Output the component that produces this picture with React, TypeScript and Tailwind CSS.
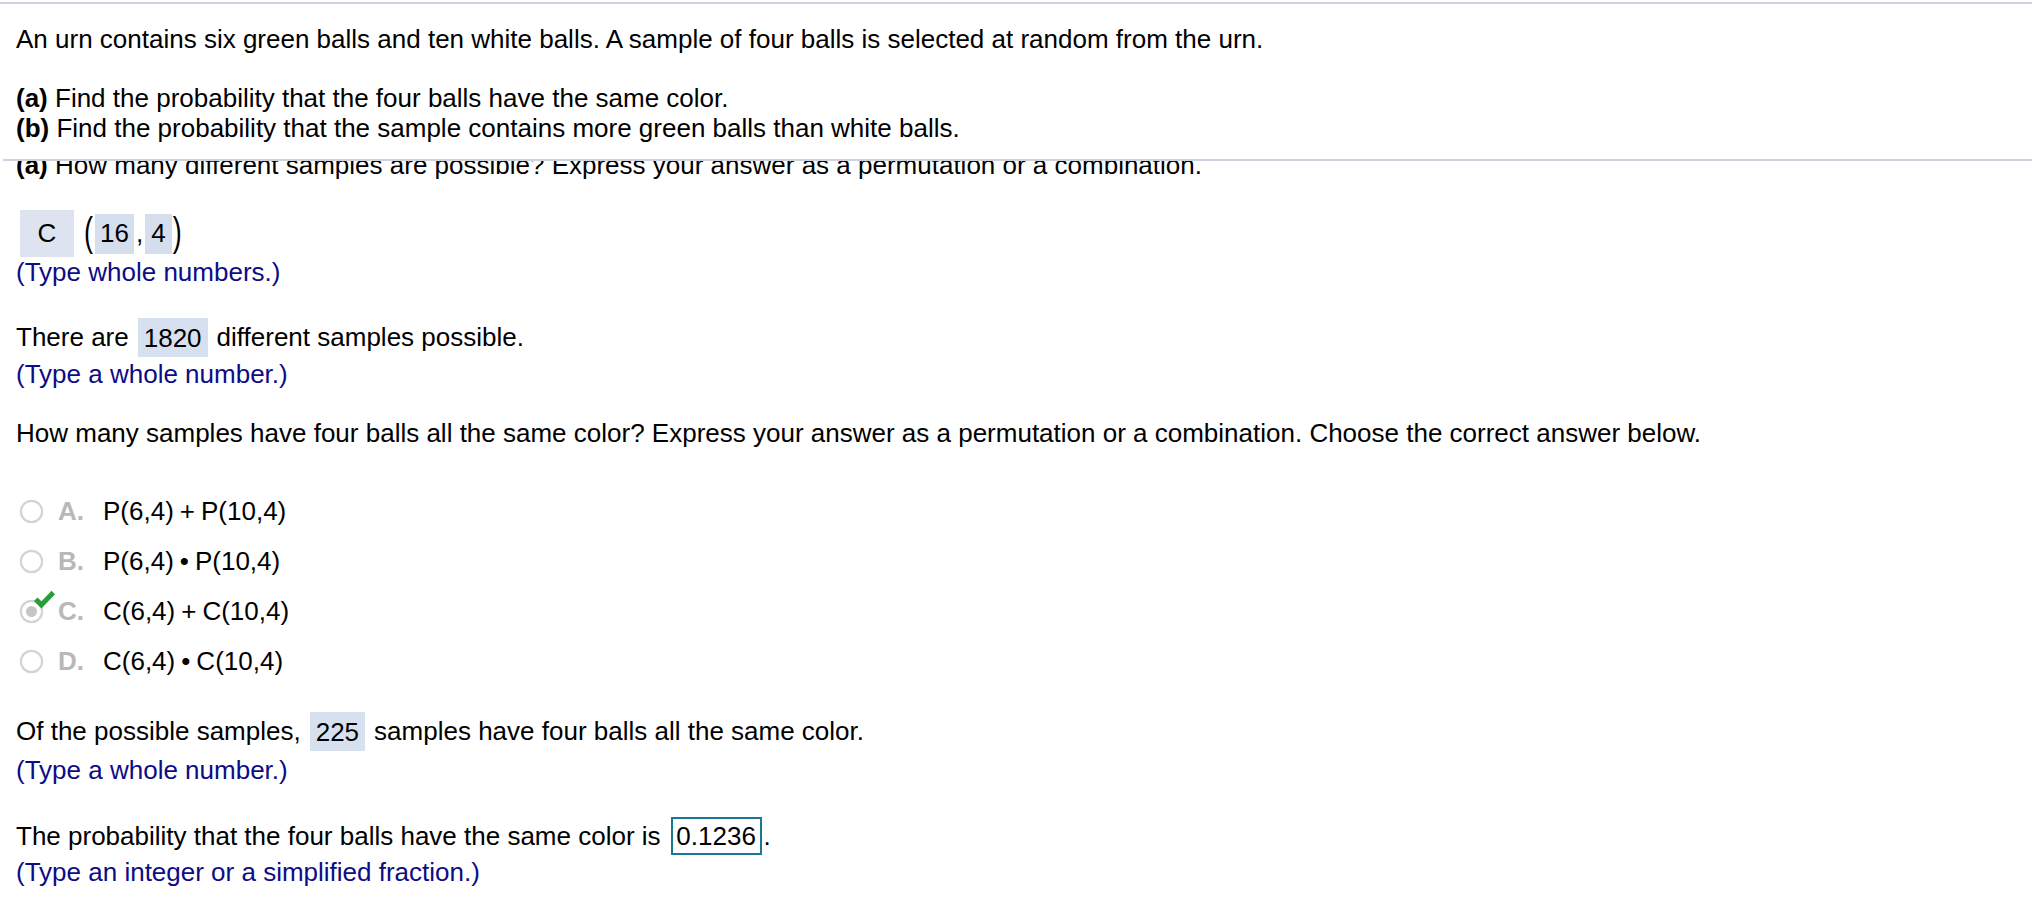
import React from "react";

const font = "font-['Liberation_Sans',Arial,Helvetica,sans-serif]";

function Hint({ children, className = "" }: { children: React.ReactNode; className?: string }) {
  return <div className={`leading-[30px] text-[#0c0c86] ${className}`}>{children}</div>;
}

function Answer({ value }: { value: string }) {
  return (
    <span className="mx-[9px] flex h-[39px] items-center bg-[#d7e0ee] px-[6px] leading-[30px]">
      {value}
    </span>
  );
}

function Radio({ checked }: { checked?: boolean }) {
  return (
    <span className="relative flex h-[23px] w-[23px] items-center justify-center rounded-full border-2 border-[#d3d3d3] bg-white shadow-[0_0_1px_#d8d8d8]">
      {checked && <span className="h-[11px] w-[11px] rounded-full bg-[#c6c6c6]" />}
      {checked && (
        <svg
          className="absolute left-[11px] top-[-12px]"
          width="23"
          height="20"
          viewBox="0 0 21 19"
        >
          <path d="M0.5 10.5 L3.8 7.2 L7.6 10.8 L17.2 0.8 L20.5 4 L7.6 17.5 Z" fill="#2b9b3c" />
        </svg>
      )}
    </span>
  );
}

const options = [
  { letter: "A.", a: "P(6,4)", op: "+", b: "P(10,4)" },
  { letter: "B.", a: "P(6,4)", op: "•", b: "P(10,4)" },
  { letter: "C.", a: "C(6,4)", op: "+", b: "C(10,4)", checked: true },
  { letter: "D.", a: "C(6,4)", op: "•", b: "C(10,4)" },
];

export default function App() {
  return (
    <div className={`${font} h-[922px] w-full overflow-hidden bg-white text-[26px] text-black`}>
      {/* fixed question header */}
      <div className="mt-[2px] border-t-2 border-[#cfd3de] pl-[16px] pt-[20px] pb-[16px]">
        <p className="leading-[30px]">
          An urn contains six green balls and ten white balls. A sample of four balls is selected at random from the urn.
        </p>
        <p className="mt-[29px] leading-[30px]">
          <b>(a)</b> Find the probability that the four balls have the same color.
        </p>
        <p className="leading-[30px]">
          <b>(b)</b> Find the probability that the sample contains more green balls than white balls.
        </p>
      </div>
      <div className="ml-[3px] h-[2px] bg-[#cfd3de]" />

      {/* scrolled work area */}
      <div className="h-[759px] overflow-hidden">
        <div className="mt-[-11px] pl-[16px]">
          <p className="leading-[30px]">
            <b>(a)</b> How many different samples are possible? Express your answer as a permutation or a combination.
          </p>

          <div className="mt-[30px] flex h-[47px] items-center">
            <span className="ml-[4px] flex h-[47px] w-[54px] items-center justify-center bg-[#dde4f0]">C</span>
            <span className="ml-[10px] inline-block scale-y-[1.5] text-[27px] leading-none">(</span>
            <span className="ml-[2px] flex h-[40px] items-center bg-[#d5deed] px-[5px]">16</span>
            <span className="px-[2px]">,</span>
            <span className="flex h-[40px] items-center bg-[#d5deed] px-[6px]">4</span>
            <span className="ml-[1px] inline-block scale-y-[1.5] text-[27px] leading-none">)</span>
          </div>
          <Hint>(Type whole numbers.)</Hint>

          <div className="mt-[31px] flex h-[39px] items-center">
            <span>There are</span>
            <Answer value="1820" />
            <span>different samples possible.</span>
          </div>
          <Hint className="mt-[2px]">(Type a whole number.)</Hint>

          <p className="mt-[29px] leading-[30px]">
            How many samples have four balls all the same color? Express your answer as a permutation or a combination. Choose the correct answer below.
          </p>

          <div className="mt-[38px]">
            {options.map((o) => (
              <div key={o.letter} className="flex h-[50px] items-center pl-[4px]">
                <Radio checked={o.checked} />
                <span className="ml-[15px] w-[45px] font-bold text-[#b8b8b8]">{o.letter}</span>
                <span className="flex items-center">
                  <span>{o.a}</span>
                  <span className="mx-[6px]">{o.op}</span>
                  <span>{o.b}</span>
                </span>
              </div>
            ))}
          </div>

          <div className="mt-[26px] flex h-[39px] items-center">
            <span>Of the possible samples,</span>
            <Answer value="225" />
            <span>samples have four balls all the same color.</span>
          </div>
          <Hint className="mt-[4px]">(Type a whole number.)</Hint>

          <div className="mt-[32px] flex h-[38px] items-center">
            <span>The probability that the four balls have the same color is</span>
            <span className="ml-[10px] flex h-[38px] w-[91px] items-center justify-center border-2 border-[#1b7895]">
              0.1236
            </span>
            <span className="ml-[2px]">.</span>
          </div>
          <Hint className="mt-[2px]">(Type an integer or a simplified fraction.)</Hint>
        </div>
      </div>
    </div>
  );
}
